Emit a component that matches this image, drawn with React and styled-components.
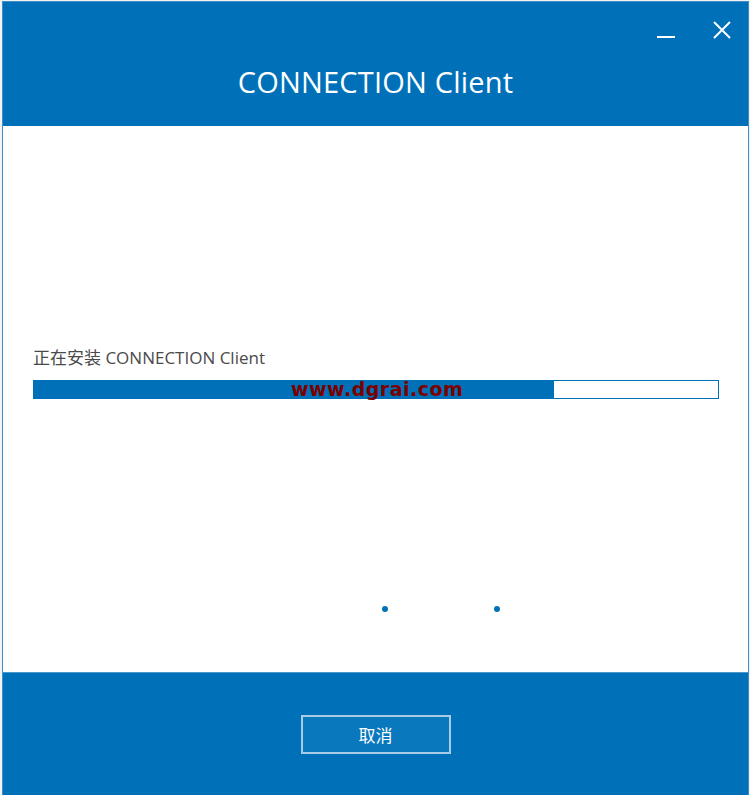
import React from "react";
import styled, { createGlobalStyle } from "styled-components";

const GlobalStyle = createGlobalStyle`
  html, body {
    margin: 0;
    padding: 0;
    background: #f3f3f3;
  }
  body {
    font-family: "Open Sans", "Noto Sans CJK SC", sans-serif;
  }
`;

const Window = styled.div`
  margin: 1px 0 0 2px;
  width: 747px;
  height: 794px;
  box-sizing: border-box;
  border: 1px solid #3f8fc8;
  border-bottom: none;
  display: flex;
  flex-direction: column;
  background: #ffffff;
  overflow: hidden;
`;

const Header = styled.div`
  position: relative;
  height: 124px;
  background: #0071b9;
  display: flex;
  align-items: center;
  justify-content: center;
  padding-top: 34px;
  box-sizing: border-box;
`;

const Title = styled.h1`
  margin: 0;
  font-family: "Open Sans", sans-serif;
  font-weight: 400;
  font-size: 29px;
  color: #ffffff;
  letter-spacing: 0.2px;
`;

const Controls = styled.div`
  position: absolute;
  top: 18px;
  right: 16px;
  display: flex;
  gap: 36px;
  align-items: center;
`;

const CtrlBtn = styled.button`
  width: 20px;
  height: 20px;
  padding: 0;
  border: none;
  background: transparent;
  display: flex;
  align-items: center;
  justify-content: center;
  cursor: pointer;
`;

const Body = styled.div`
  flex: 1;
  display: flex;
  flex-direction: column;
  padding: 221px 29px 0 30px;
`;

const Label = styled.div`
  font-family: "Open Sans", "Noto Sans CJK SC", sans-serif;
  font-size: 17px;
  color: #4a4a4a;
  margin-bottom: 11px;
  line-height: 22px;
`;

const Track = styled.div`
  position: relative;
  height: 19px;
  box-sizing: border-box;
  border: 1px solid #0071b9;
  background: #ffffff;
`;

const Fill = styled.div`
  height: 100%;
  background: #0071b9;
`;

const Watermark = styled.span`
  position: absolute;
  left: 257px;
  top: -4px;
  font-family: "DejaVu Sans", sans-serif;
  font-weight: 700;
  font-size: 19px;
  color: #7a0000;
  letter-spacing: 0.5px;
  line-height: 24px;
`;

const Dots = styled.div`
  display: flex;
  gap: 106px;
  margin-top: 207px;
  padding-left: 349px;
`;

const Dot = styled.span`
  width: 6px;
  height: 6px;
  border-radius: 50%;
  background: #0071b9;
`;

const Footer = styled.div`
  height: 123px;
  background: #0071b9;
  border-top: 1px solid #4a97cc;
  display: flex;
  align-items: center;
  justify-content: center;
  box-sizing: border-box;
`;

const CancelButton = styled.button`
  width: 150px;
  height: 39px;
  box-sizing: border-box;
  border: 2px solid #a8cce6;
  background: #0a78bd;
  color: #ffffff;
  font-family: "Noto Sans CJK SC", sans-serif;
  font-size: 17px;
  cursor: pointer;
`;

export default function App() {
  const progress = 76;
  return (
    <>
      <GlobalStyle />
      <Window>
        <Header>
          <Title>CONNECTION Client</Title>
          <Controls>
            <CtrlBtn aria-label="minimize">
              <svg width="20" height="20" viewBox="0 0 20 20">
                <line x1="1" y1="17" x2="19" y2="17" stroke="#fff" strokeWidth="2" />
              </svg>
            </CtrlBtn>
            <CtrlBtn aria-label="close">
              <svg width="20" height="20" viewBox="0 0 20 20">
                <path d="M2 2 L18 18 M18 2 L2 18" stroke="#fff" strokeWidth="2" />
              </svg>
            </CtrlBtn>
          </Controls>
        </Header>
        <Body>
          <Label>正在安装 CONNECTION Client</Label>
          <Track>
            <Fill style={{ width: `${progress}%` }} />
            <Watermark>www.dgrai.com</Watermark>
          </Track>
          <Dots>
            <Dot />
            <Dot />
          </Dots>
        </Body>
        <Footer>
          <CancelButton>取消</CancelButton>
        </Footer>
      </Window>
    </>
  );
}
